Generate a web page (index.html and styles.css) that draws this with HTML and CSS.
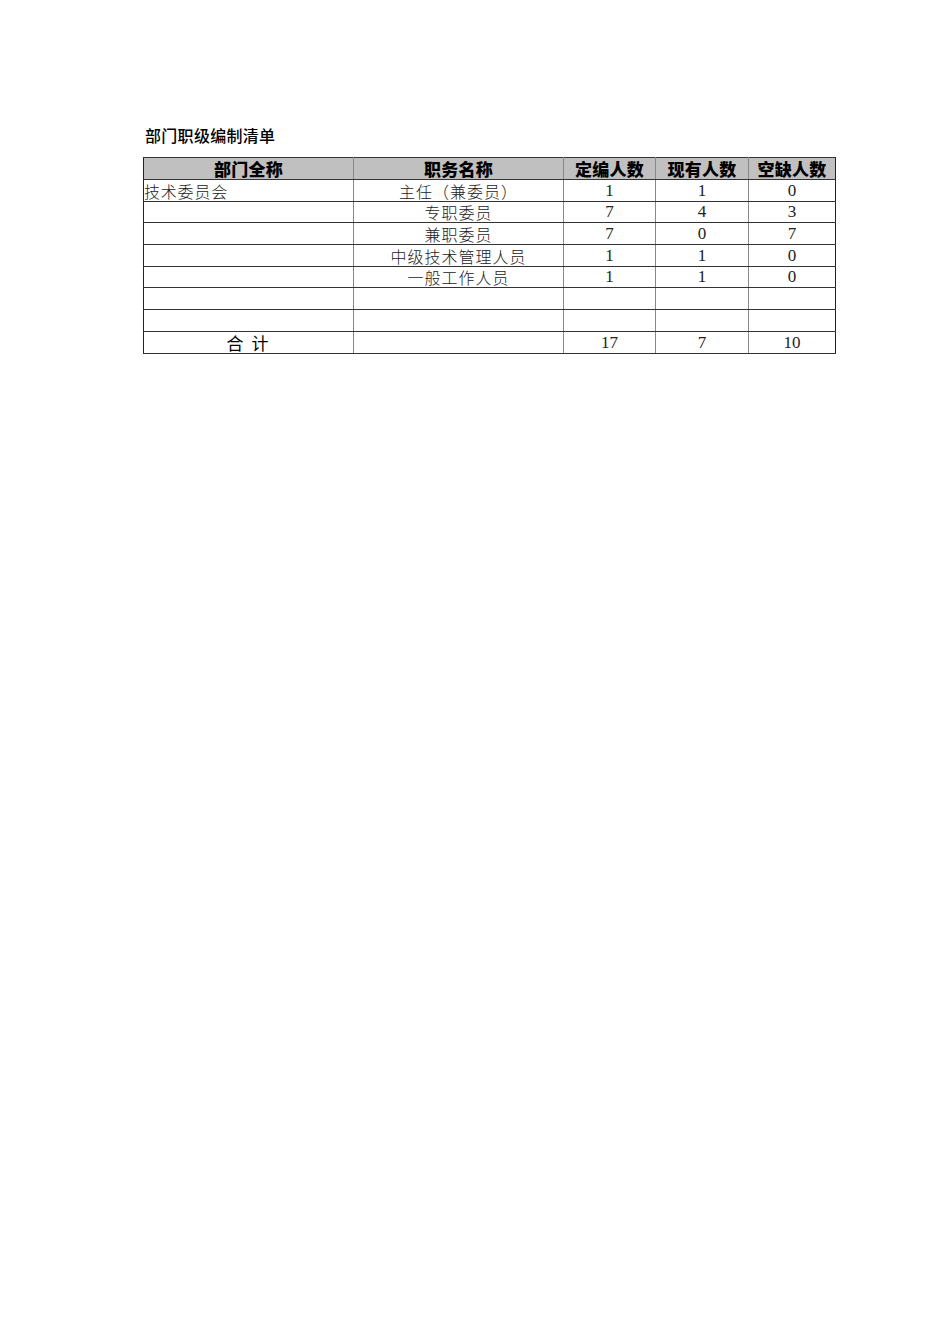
FILE: index.html
```html
<!DOCTYPE html>
<html lang="zh-CN">
<head>
<meta charset="utf-8">
<title>部门职级编制清单</title>
<link rel="stylesheet" href="styles.css">
</head>
<body>
<div class="page">
  <div class="title">部门职级编制清单</div>
  <table class="sheet">
    <colgroup>
      <col class="c1"><col class="c2"><col class="c3"><col class="c4"><col class="c5">
    </colgroup>
    <thead>
      <tr class="head">
        <th>部门全称</th><th>职务名称</th><th>定编人数</th><th>现有人数</th><th>空缺人数</th>
      </tr>
    </thead>
    <tbody>
      <tr><td class="dept">技术委员会</td><td class="pos">主任（兼委员）</td><td class="num">1</td><td class="num">1</td><td class="num">0</td></tr>
      <tr><td class="dept"></td><td class="pos">专职委员</td><td class="num">7</td><td class="num">4</td><td class="num">3</td></tr>
      <tr><td class="dept"></td><td class="pos">兼职委员</td><td class="num">7</td><td class="num">0</td><td class="num">7</td></tr>
      <tr><td class="dept"></td><td class="pos">中级技术管理人员</td><td class="num">1</td><td class="num">1</td><td class="num">0</td></tr>
      <tr><td class="dept"></td><td class="pos">一般工作人员</td><td class="num">1</td><td class="num">1</td><td class="num">0</td></tr>
      <tr><td></td><td></td><td></td><td></td><td></td></tr>
      <tr><td></td><td></td><td></td><td></td><td></td></tr>
      <tr><td class="total">合 计</td><td></td><td class="num">17</td><td class="num">7</td><td class="num">10</td></tr>
    </tbody>
  </table>
</div>
</body>
</html>
```

FILE: styles.css
```css
html, body {
  margin: 0;
  padding: 0;
  background: #ffffff;
}
.page {
  padding: 126px 0 0 143px;
}
.title {
  font-family: "Noto Sans CJK SC", "Noto Sans", sans-serif;
  font-size: 16px;
  font-weight: 500;
  line-height: 18px;
  color: #000;
  padding-left: 2px;
  letter-spacing: 0.3px;
}
.sheet {
  margin-top: 13px;
  border-collapse: collapse;
  table-layout: fixed;
  width: 692px;
  border: 1px solid #222;
}
.c1 { width: 210px; }
.c2 { width: 210px; }
.c3 { width: 92px; }
.c4 { width: 93px; }
.c5 { width: 87px; }
.sheet tr {
  height: 21.7px;
}
.sheet th, .sheet td {
  padding: 0;
  border-top: 1px solid #333;
  border-bottom: 1px solid #333;
  border-left: 1px solid #888;
  border-right: 1px solid #888;
  vertical-align: bottom;
  line-height: 20px;
  white-space: nowrap;
}
.sheet th:first-child, .sheet td:first-child { border-left-color: #222; }
.sheet th:last-child, .sheet td:last-child { border-right-color: #222; }
.head th {
  background: #c0c0c0;
  font-family: "Noto Sans CJK SC", "Noto Sans", sans-serif;
  font-weight: 900;
  font-size: 17px;
  line-height: 21px;
  color: #000;
  text-align: center;
  letter-spacing: 0.3px;
  vertical-align: middle;
}
.dept {
  font-family: "Noto Sans CJK SC", sans-serif;
  font-weight: 300;
  font-size: 16px;
  letter-spacing: 0.8px;
  text-align: left;
  color: #222;
}
.pos {
  font-family: "Noto Sans CJK SC", sans-serif;
  font-weight: 300;
  font-size: 16px;
  letter-spacing: 1px;
  text-align: center;
  color: #222;
}
.num {
  font-family: "Liberation Serif", "Times New Roman", serif;
  font-size: 17px;
  line-height: 19px;
  text-align: center;
  color: #222;
}
.total {
  font-family: "Noto Sans CJK SC", sans-serif;
  font-size: 17px;
  font-weight: 400;
  text-align: center;
  letter-spacing: 2px;
  color: #000;
}
```
